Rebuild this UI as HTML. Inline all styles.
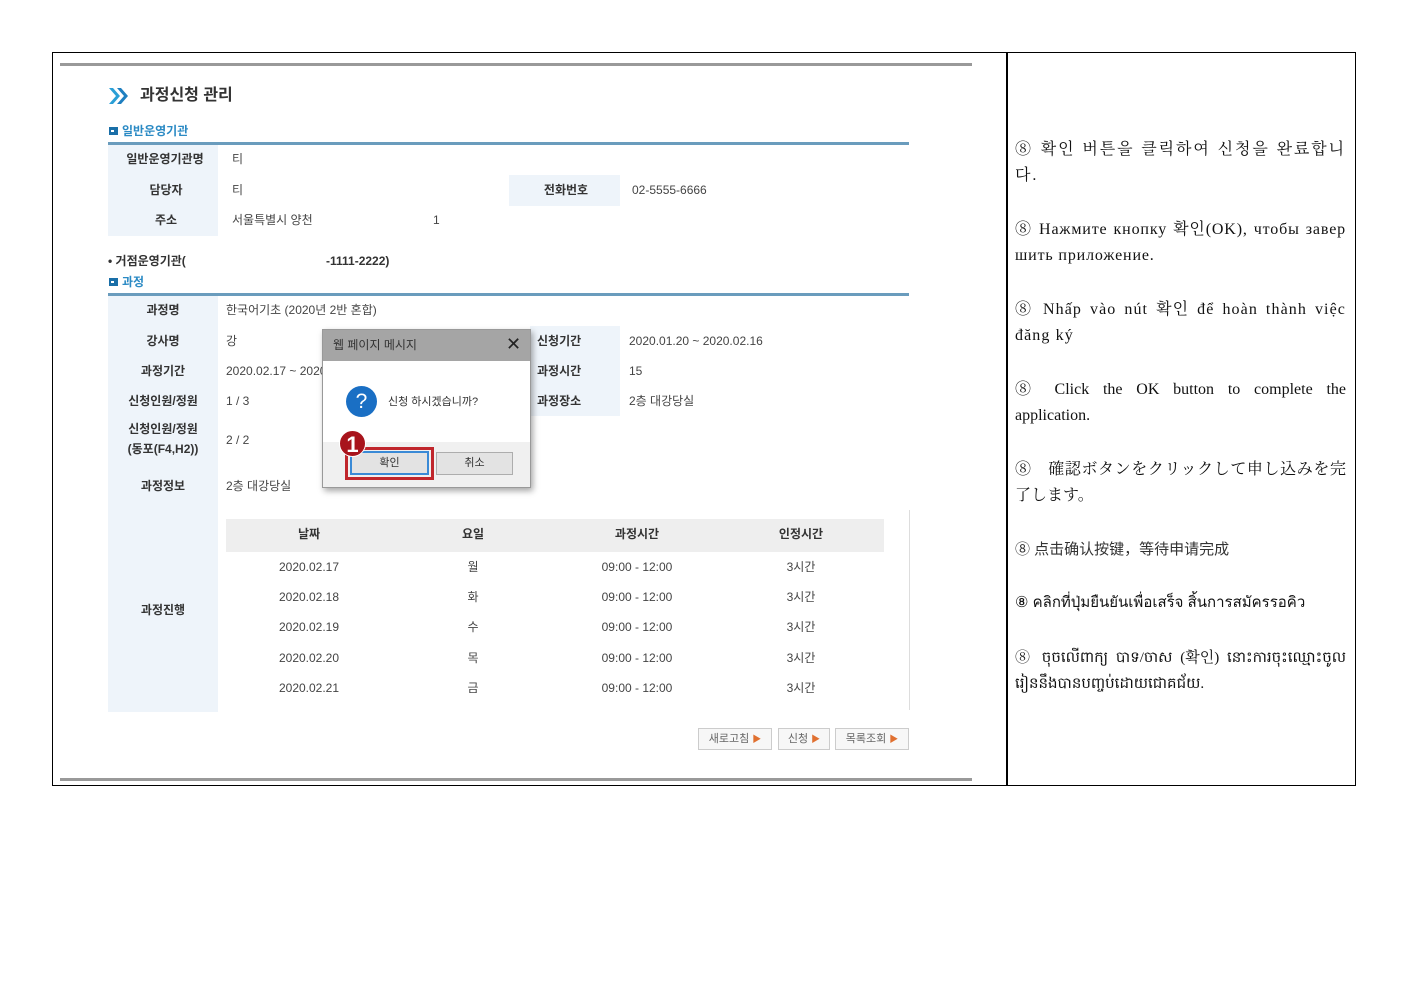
<!DOCTYPE html>
<html><head><meta charset="utf-8"><style>
body{margin:0;width:1403px;height:992px;background:#fff;position:relative;overflow:hidden;font-family:"Liberation Sans","Noto Sans CJK KR",sans-serif;}
div,span{position:absolute;box-sizing:border-box;}
.t{white-space:nowrap;font-size:12px;color:#444;line-height:14px;}
.b{font-weight:bold;color:#333;}
.lab{background:#eef4fa;}
.c{transform:translateX(-50%);}
.r{font-family:"Liberation Serif","Noto Serif CJK KR",serif;font-size:16px;color:#111;left:1015px;width:331px;line-height:26px;text-align:justify;text-align-last:left;white-space:normal;}
.btn{border:1px solid #ccc;background:#f7f7f7;height:22px;font-size:11px;color:#666;text-align:center;line-height:20px;}
.btn i{color:#e07030;font-style:normal;font-size:9px;}
</style></head><body>
<div style="left:52px;top:52px;width:1304px;height:734px;border:1.5px solid #000;"></div>
<div style="left:1006px;top:52px;width:1.5px;height:734px;background:#000;"></div>
<div style="left:60px;top:63px;width:912px;height:3px;background:#999;"></div>
<div style="left:60px;top:778px;width:912px;height:3px;background:#999;"></div>

<svg style="position:absolute;left:108px;top:87px" width="22" height="18"><path d="M1 1 L8 9 L1 17 L5 17 L12 9 L5 1Z" fill="#2a9fd6"/><path d="M9 1 L16 9 L9 17 L13 17 L20 9 L13 1Z" fill="#1f7fc0"/></svg>
<div class="t b" style="left:140px;top:86px;font-size:16px;line-height:20px;">과정신청 관리</div>
<div style="left:109px;top:127px;width:9px;height:8px;background:#1a6fa8;"><span style="left:2px;top:3px;width:3px;height:2px;background:#fff"></span></div>
<div class="t" style="left:122px;top:124px;color:#2b8ac4;font-weight:bold;">일반운영기관</div>
<div style="left:108px;top:142px;width:801px;height:3px;background:#6a9cbd;"></div>
<div class="lab" style="left:108px;top:145px;width:110px;height:91px;"></div>
<div class="lab" style="left:509px;top:175px;width:111px;height:31px;"></div>
<div class="t b c" style="left:165px;top:152px;">일반운영기관명</div>
<div class="t b c" style="left:166px;top:183px;">담당자</div>
<div class="t b c" style="left:166px;top:213px;">주소</div>
<div class="t b c" style="left:566px;top:183px;">전화번호</div>
<div class="t" style="left:232px;top:152px;">티</div>
<div class="t" style="left:232px;top:183px;">티</div>
<div class="t" style="left:232px;top:213px;">서울특별시 양천</div>
<div class="t" style="left:433px;top:213px;">1</div>
<div class="t" style="left:632px;top:183px;">02-5555-6666</div>
<div class="t b" style="left:108px;top:254px;">• 거점운영기관(</div>
<div class="t b" style="left:326px;top:254px;">-1111-2222)</div>
<div style="left:109px;top:278px;width:9px;height:8px;background:#1a6fa8;"><span style="left:2px;top:3px;width:3px;height:2px;background:#fff"></span></div>
<div class="t" style="left:122px;top:275px;color:#2b8ac4;font-weight:bold;">과정</div>
<div style="left:108px;top:293px;width:801px;height:3px;background:#6a9cbd;"></div>
<div class="lab" style="left:108px;top:296px;width:110px;height:416px;"></div>
<div class="lab" style="left:530px;top:326px;width:90px;height:90px;"></div>
<div class="t b c" style="left:163px;top:303px;">과정명</div>
<div class="t b c" style="left:163px;top:334px;">강사명</div>
<div class="t b c" style="left:163px;top:364px;">과정기간</div>
<div class="t b c" style="left:163px;top:394px;">신청인원/정원</div>
<div class="t b c" style="left:163px;top:422px;">신청인원/정원</div>
<div class="t b c" style="left:163px;top:442px;">(동포(F4,H2))</div>
<div class="t b c" style="left:163px;top:479px;">과정정보</div>
<div class="t b c" style="left:163px;top:603px;">과정진행</div>
<div class="t" style="left:226px;top:303px;">한국어기초 (2020년 2반 혼합)</div>
<div class="t" style="left:226px;top:334px;">강</div>
<div class="t" style="left:226px;top:364px;">2020.02.17 ~ 2020</div>
<div class="t" style="left:226px;top:394px;">1 / 3</div>
<div class="t" style="left:226px;top:433px;">2 / 2</div>
<div class="t" style="left:226px;top:479px;">2층 대강당실</div>
<div class="t b" style="left:537px;top:334px;">신청기간</div>
<div class="t b" style="left:537px;top:364px;">과정시간</div>
<div class="t b" style="left:537px;top:394px;">과정장소</div>
<div class="t" style="left:629px;top:334px;">2020.01.20 ~ 2020.02.16</div>
<div class="t" style="left:629px;top:364px;">15</div>
<div class="t" style="left:629px;top:394px;">2층 대강당실</div>

<div style="left:909px;top:510px;width:1px;height:200px;background:#ddd;"></div>
<div style="left:226px;top:519px;width:658px;height:33px;background:#eeeeee;"></div>
<div class="t b c" style="left:309px;top:527px;">날짜</div>
<div class="t b c" style="left:473px;top:527px;">요일</div>
<div class="t b c" style="left:637px;top:527px;">과정시간</div>
<div class="t b c" style="left:801px;top:527px;">인정시간</div>
<div class="t c" style="left:309px;top:560px;">2020.02.17</div><div class="t c" style="left:473px;top:560px;">월</div><div class="t c" style="left:637px;top:560px;">09:00 - 12:00</div><div class="t c" style="left:801px;top:560px;">3시간</div>
<div class="t c" style="left:309px;top:590px;">2020.02.18</div><div class="t c" style="left:473px;top:590px;">화</div><div class="t c" style="left:637px;top:590px;">09:00 - 12:00</div><div class="t c" style="left:801px;top:590px;">3시간</div>
<div class="t c" style="left:309px;top:620px;">2020.02.19</div><div class="t c" style="left:473px;top:620px;">수</div><div class="t c" style="left:637px;top:620px;">09:00 - 12:00</div><div class="t c" style="left:801px;top:620px;">3시간</div>
<div class="t c" style="left:309px;top:651px;">2020.02.20</div><div class="t c" style="left:473px;top:651px;">목</div><div class="t c" style="left:637px;top:651px;">09:00 - 12:00</div><div class="t c" style="left:801px;top:651px;">3시간</div>
<div class="t c" style="left:309px;top:681px;">2020.02.21</div><div class="t c" style="left:473px;top:681px;">금</div><div class="t c" style="left:637px;top:681px;">09:00 - 12:00</div><div class="t c" style="left:801px;top:681px;">3시간</div>
<div class="btn" style="left:698px;top:728px;width:74px;">새로고침 <i>▶</i></div>
<div class="btn" style="left:778px;top:728px;width:52px;">신청 <i>▶</i></div>
<div class="btn" style="left:835px;top:728px;width:74px;">목록조회 <i>▶</i></div>

<div style="left:322px;top:329px;width:209px;height:159px;background:#fff;border:1px solid #999;box-shadow:2px 3px 6px rgba(0,0,0,.35);"></div>
<div style="left:323px;top:330px;width:207px;height:31px;background:#a5a5a5;"></div>
<div class="t" style="left:333px;top:338px;color:#333;">웹 페이지 메시지</div>
<div class="t" style="left:506px;top:335px;font-size:18px;line-height:18px;color:#222;">✕</div>
<div style="left:346px;top:386px;width:31px;height:31px;border-radius:50%;background:#1a6fc4;color:#fff;font-size:21px;line-height:31px;text-align:center;">?</div>
<div class="t" style="left:388px;top:395px;font-size:11px;color:#333;">신청 하시겠습니까?</div>
<div style="left:323px;top:442px;width:207px;height:45px;background:#f0f0f0;"></div>
<div style="left:345px;top:447px;width:89px;height:33px;border:3px solid #c0262c;"></div>
<div style="left:350px;top:451px;width:79px;height:24px;background:#e3e3e3;border:2px solid #3a8ad6;font-size:11px;text-align:center;line-height:20px;color:#333;">확인</div>
<div style="left:436px;top:452px;width:77px;height:23px;background:#e3e3e3;border:1px solid #adadad;font-size:11px;text-align:center;line-height:21px;color:#333;">취소</div>
<div style="left:339px;top:430px;width:27px;height:27px;border-radius:50%;background:#a8141c;color:#fff;font-weight:bold;font-size:22px;line-height:27px;text-align:center;border:1px solid #fff;">1</div>

<div class="r" style="top:137px;letter-spacing:1.9px;word-break:break-all;">⑧ 확인 버튼을 클릭하여 신청을 완료합니다.</div>
<div class="r" style="top:217px;letter-spacing:0.85px;word-break:break-all;">⑧ Нажмите кнопку 확인(OK), чтобы завершить приложение.</div>
<div class="r" style="top:297px;letter-spacing:1.1px;">⑧ Nhấp vào nút 확인 để hoàn thành việc đăng ký</div>
<div class="r" style="top:377px;">⑧ Click the OK button to complete the application.</div>
<div class="r" style="top:457px;font-family:'Liberation Serif','Noto Serif CJK JP',serif;">⑧　確認ボタンをクリックして申し込みを完了します。</div>
<div class="r" style="top:537px;font-family:'Liberation Sans','Noto Sans CJK SC',sans-serif;font-size:15px;color:#333;">⑧ 点击确认按键，等待申请完成</div>
<div class="r" style="top:590px;font-family:'Liberation Sans',sans-serif;font-size:15px;">⑧ คลิกที่ปุ่มยืนยันเพื่อเสร็จ สิ้นการสมัครรอคิว</div>
<div class="r" style="top:645px;font-size:15px;">⑧ ចុចលើពាក្យ បាទ/ចាស (확인) នោះការចុះឈ្មោះចូលរៀននឹងបានបញ្ចប់ដោយជោគជ័យ.</div>
</body></html>
